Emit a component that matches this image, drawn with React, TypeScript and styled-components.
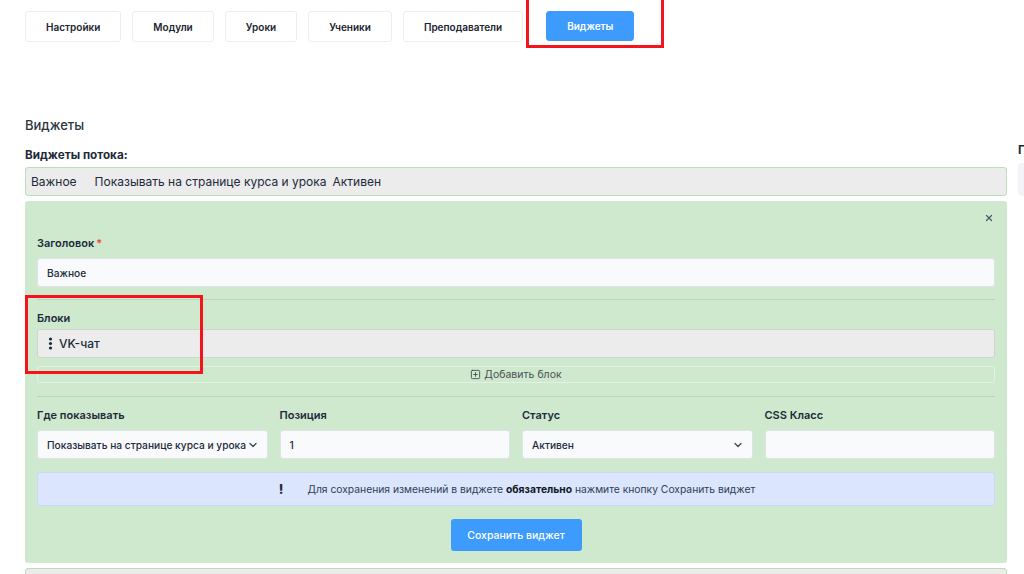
import React from "react";
import styled, { createGlobalStyle } from "styled-components";
import { ChevronDown, SquarePlus, X } from "lucide-react";

const GlobalStyle = createGlobalStyle`
  html, body {
    margin: 0;
    padding: 0;
    background: #ffffff;
    overflow: hidden;
  }
  body {
    font-family: Inter, "Noto Sans", sans-serif;
    color: #1d2a3a;
  }
`;

const Page = styled.div`
  display: flex;
  flex-direction: row;
  gap: 11px;
  width: 1300px;
  height: 574px;
  padding-left: 25px;
  overflow: hidden;
`;

const Main = styled.div`
  width: 982px;
  flex-shrink: 0;
`;

const Side = styled.div`
  width: 260px;
  flex-shrink: 0;
  padding-top: 143px;
`;

const SideLabel = styled.div`
  font-size: 12px;
  font-weight: 700;
  line-height: 14px;
  color: #1d2a3a;
  white-space: nowrap;
`;

const SideBox = styled.div`
  margin-top: 6px;
  height: 33px;
  border-radius: 4px;
  background: #f1f3f6;
`;

/* Tabs */

const Tabs = styled.div`
  display: flex;
  flex-direction: row;
  align-items: flex-start;
  gap: 11px;
  padding-top: 11px;
`;

const Tab = styled.div<{ $active?: boolean }>`
  display: flex;
  align-items: center;
  justify-content: center;
  height: ${(p) => (p.$active ? 30 : 31)}px;
  box-sizing: border-box;
  padding: 0 20px;
  border: 1px solid ${(p) => (p.$active ? "#3d9bfd" : "#eceef1")};
  border-radius: 3px;
  background: ${(p) => (p.$active ? "#3d9bfd" : "#ffffff")};
  color: ${(p) => (p.$active ? "#ffffff" : "#1b2430")};
  font-size: 10px;
  font-weight: 600;
  white-space: nowrap;
`;

const TabMark = styled.div`
  position: relative;
  margin-left: 12px;
`;

/* red annotation frame lying over the content */
const Frame = styled.div<{ $left: number; $top: number; $width: number; $height: number }>`
  position: absolute;
  left: ${(p) => p.$left}px;
  top: ${(p) => p.$top}px;
  width: ${(p) => p.$width}px;
  height: ${(p) => p.$height}px;
  box-sizing: border-box;
  border: 3px solid #f4141b;
  pointer-events: none;
`;

/* Widgets section */

const Heading = styled.div`
  margin-top: 74px;
  font-size: 13px;
  font-weight: 500;
  line-height: 18px;
  color: #2a3442;
`;

const SubHeading = styled.div`
  margin-top: 13px;
  font-size: 11.7px;
  font-weight: 700;
  line-height: 16px;
  color: #1d2a3a;
`;

const WidgetRow = styled.div`
  display: flex;
  align-items: center;
  margin-top: 4px;
  height: 29px;
  box-sizing: border-box;
  padding: 0 5px;
  border: 1px solid #b8dfb8;
  border-radius: 3px;
  background: #ececec;
  font-size: 12px;
  color: #1d2a3a;
`;

const RowCell = styled.span<{ $gap: number }>`
  margin-right: ${(p) => p.$gap}px;
`;

const Panel = styled.div`
  margin-top: 5px;
  padding: 0 12px 12px;
  border-radius: 3px;
  background: #cfe9cf;
`;

const PanelHeader = styled.div`
  display: flex;
  justify-content: flex-end;
  align-items: center;
  height: 34px;
  padding-right: 1px;
  color: #4b5a66;
`;

const Label = styled.div<{ $gap?: number }>`
  font-size: 11px;
  font-weight: 600;
  line-height: 16px;
  color: #1d2a3a;
  margin-bottom: ${(p) => p.$gap ?? 7}px;
  white-space: nowrap;
`;

const Required = styled.span`
  color: #ef4444;
  margin-left: 2px;
`;

const Input = styled.div`
  display: flex;
  align-items: center;
  justify-content: space-between;
  height: 29px;
  box-sizing: border-box;
  padding: 0 8px 0 9px;
  border: 1px solid #dfe3e8;
  border-radius: 3px;
  background: #f8fafc;
  font-size: 10.2px;
  font-weight: 500;
  color: #1d2a3a;
  white-space: nowrap;
  overflow: hidden;
`;

const Divider = styled.div<{ $top: number }>`
  margin-top: ${(p) => p.$top}px;
  height: 1px;
  background: #b9d8b9;
`;

const Section = styled.div<{ $top: number }>`
  position: relative;
  margin-top: ${(p) => p.$top}px;
`;

const BlockItem = styled.div`
  display: flex;
  align-items: center;
  gap: 6px;
  height: 29px;
  box-sizing: border-box;
  padding: 0 9px 0 10px;
  border: 1px solid #cfd4d0;
  border-radius: 3px;
  background: #ececec;
  font-size: 12px;
  font-weight: 500;
  color: #1d2a3a;
`;

const AddBlock = styled.div`
  display: flex;
  align-items: center;
  justify-content: center;
  gap: 3px;
  margin-top: 8px;
  height: 17px;
  box-sizing: border-box;
  border: 1px solid #e2f1e2;
  border-radius: 2px;
  font-size: 10.5px;
  color: #4a5058;
`;

const Grid = styled.div`
  display: grid;
  grid-template-columns: repeat(4, minmax(0, 1fr));
  column-gap: 12px;
  margin-top: 10px;
`;

const Notice = styled.div`
  display: flex;
  align-items: center;
  justify-content: center;
  gap: 24px;
  margin-top: 13px;
  height: 34px;
  box-sizing: border-box;
  padding-left: 2px;
  border: 1px solid #ccd8f6;
  border-radius: 3px;
  background: #dbe5fd;
  font-size: 10.3px;
  color: #2f3e52;
`;

const Bang = styled.span`
  font-size: 13px;
  font-weight: 800;
  color: #1d2a3a;
`;

const Strong = styled.b`
  font-weight: 700;
  color: #111827;
`;

const ButtonRow = styled.div`
  display: flex;
  justify-content: center;
  margin-top: 13px;
`;

const SaveButton = styled.div`
  display: flex;
  align-items: center;
  justify-content: center;
  width: 131px;
  height: 32px;
  border-radius: 3px;
  background: #3d9bfd;
  color: #ffffff;
  font-size: 10.5px;
  font-weight: 500;
`;

const NextRow = styled.div`
  margin-top: 5px;
  height: 29px;
  border: 1px solid #b8dfb8;
  border-radius: 3px;
  background: #ececec;
`;

const DragDots = () => (
  <svg width="5" height="13" viewBox="0 0 5 13" fill="#1d2a3a">
    <circle cx="2.5" cy="2" r="1.6" />
    <circle cx="2.5" cy="6.5" r="1.6" />
    <circle cx="2.5" cy="11" r="1.6" />
  </svg>
);

const tabs = ["Настройки", "Модули", "Уроки", "Ученики", "Преподаватели"];

const fields = [
  { label: "Где показывать", value: "Показывать на странице курса и урока", select: true },
  { label: "Позиция", value: "1", select: false },
  { label: "Статус", value: "Активен", select: true },
  { label: "CSS Класс", value: "", select: false },
];

export default function App() {
  return (
    <>
      <GlobalStyle />
      <Page>
        <Main>
          <Tabs>
            {tabs.map((t) => (
              <Tab key={t}>{t}</Tab>
            ))}
            <TabMark>
              <Frame $left={-20} $top={-20} $width={138} $height={57} />
              <Tab $active>Виджеты</Tab>
            </TabMark>
          </Tabs>

          <Heading>Виджеты</Heading>
          <SubHeading>Виджеты потока:</SubHeading>

          <WidgetRow>
            <RowCell $gap={18}>Важное</RowCell>
            <RowCell $gap={6}>Показывать на странице курса и урока</RowCell>
            <RowCell $gap={0}>Активен</RowCell>
          </WidgetRow>

          <Panel>
            <PanelHeader>
              <X size={10} strokeWidth={3} />
            </PanelHeader>

            <Label>
              Заголовок<Required>*</Required>
            </Label>
            <Input>Важное</Input>

            <Divider $top={12} />

            <Section $top={10}>
              <Frame $left={-12} $top={-15} $width={178} $height={79} />
              <Label $gap={3}>Блоки</Label>
              <BlockItem>
                <DragDots />
                VK-чат
              </BlockItem>
              <AddBlock>
                <SquarePlus size={11} strokeWidth={2} />
                Добавить блок
              </AddBlock>
            </Section>

            <Divider $top={13} />

            <Grid>
              {fields.map((f) => (
                <div key={f.label}>
                  <Label>{f.label}</Label>
                  <Input>
                    <span>{f.value}</span>
                    {f.select && <ChevronDown size={12} strokeWidth={2.5} color="#3a4656" />}
                  </Input>
                </div>
              ))}
            </Grid>

            <Notice>
              <Bang>!</Bang>
              <span>
                Для сохранения изменений в виджете <Strong>обязательно</Strong> нажмите кнопку Сохранить виджет
              </span>
            </Notice>

            <ButtonRow>
              <SaveButton>Сохранить виджет</SaveButton>
            </ButtonRow>
          </Panel>

          <NextRow />
        </Main>

        <Side>
          <SideLabel>Параметры</SideLabel>
          <SideBox />
        </Side>
      </Page>
    </>
  );
}
